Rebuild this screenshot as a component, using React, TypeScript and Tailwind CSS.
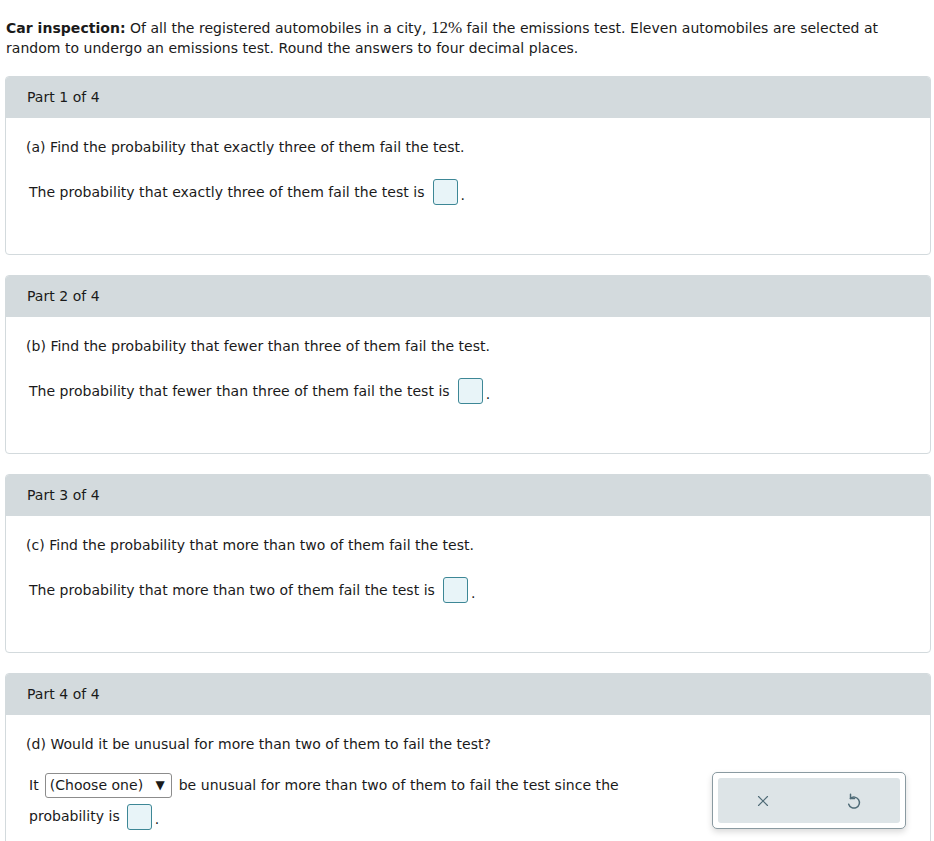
import React from "react";
import { X } from "lucide-react";

const Box = () => (
  <span className="inline-block align-middle w-[25px] h-[26px] rounded-[3px] border border-[#3d8796] bg-[#e8f4f8]" />
);

const UndoIcon = () => (
  <svg width="22" height="22" viewBox="0 0 24 24" fill="none" stroke="currentColor" strokeWidth="1.6" strokeLinecap="round" strokeLinejoin="round">
    <path d="M8 9.2 A6 6 0 1 1 6.2 15.5" />
    <path d="M8.2 4.6 V9.2 H12.6" />
  </svg>
);

function Card({
  part,
  q,
  children,
}: {
  part: string;
  q: string;
  children: React.ReactNode;
}) {
  return (
    <div className="ml-[5px] w-[926px] rounded-[4px] border border-[#d3dadd] bg-white">
      <div className="h-[41px] bg-[#d3dadd] pl-[21px] flex items-center text-[14px] rounded-t-[3px]">
        {part}
      </div>
      <div className="pl-[20px] pt-[19px]">
        <div className="h-[20px] leading-[20px]">{q}</div>
        {children}
      </div>
    </div>
  );
}

function Answer({ text }: { text: string }) {
  return (
    <div className="pl-[3px] mt-[22px] mb-[49px] h-[26px] flex items-center">
      <span>{text}</span>
      <span className="ml-[8px]">
        <Box />
      </span>
      <span className="ml-[3px] self-end leading-[20px]">.</span>
    </div>
  );
}

export default function App() {
  return (
    <div
      className="w-[934px] h-[841px] overflow-hidden bg-white text-[#1a1a1a] text-[14px] tracking-[0.03px]"
      style={{ fontFamily: "'DejaVu Sans', Verdana, sans-serif" }}
    >
      <div className="pl-[6px] pt-[18px] leading-[20px]">
        <b>Car inspection:</b> Of all the registered automobiles in a city,{" "}
        <span className="text-[17px] leading-[20px] tracking-normal" style={{ fontFamily: "'Liberation Serif', 'Times New Roman', serif" }}>
          12%
        </span>{" "}
        fail the emissions test. Eleven automobiles are selected at
        <br />
        random to undergo an emissions test. Round the answers to four decimal places.
      </div>

      <div className="mt-[18px] flex flex-col gap-[20px]">
        <Card part="Part 1 of 4" q="(a) Find the probability that exactly three of them fail the test.">
          <Answer text="The probability that exactly three of them fail the test is" />
        </Card>
        <Card part="Part 2 of 4" q="(b) Find the probability that fewer than three of them fail the test.">
          <Answer text="The probability that fewer than three of them fail the test is" />
        </Card>
        <Card part="Part 3 of 4" q="(c) Find the probability that more than two of them fail the test.">
          <Answer text="The probability that more than two of them fail the test is" />
        </Card>
        <Card part="Part 4 of 4" q="(d) Would it be unusual for more than two of them to fail the test?">
          <div className="mt-[18px] flex items-start justify-between pr-[24px]">
            <div className="pl-[3px] leading-[31px]">
              <div className="flex items-center h-[26px]">
                <span>It</span>
                <span className="ml-[6px] inline-flex items-center h-[25px] w-[127px] rounded-[3px] border border-[#8c8c8c] pl-[4px] pr-[6px] justify-between">
                  <span>(Choose one)</span>
                  <span className="text-[12px]">▼</span>
                </span>
                <span className="ml-[7px]">be unusual for more than two of them to fail the test since the</span>
              </div>
              <div className="mt-[5px] flex items-center h-[26px]">
                <span>probability is</span>
                <span className="ml-[7px]">
                  <Box />
                </span>
                <span className="ml-[3px] self-end leading-[20px]">.</span>
              </div>
            </div>
            <div className="w-[194px] h-[57px] rounded-[5px] border border-[#8a9aa1] bg-white p-[5px] shadow-[0_3px_6px_rgba(0,0,0,0.15)]">
              <div className="h-full rounded-[3px] bg-[#dde4e7] flex items-center justify-around text-[#4f6b77]">
                <X size={18} strokeWidth={1.5} />
                <UndoIcon />
              </div>
            </div>
          </div>
          <div className="h-[40px]" />
        </Card>
      </div>
    </div>
  );
}
